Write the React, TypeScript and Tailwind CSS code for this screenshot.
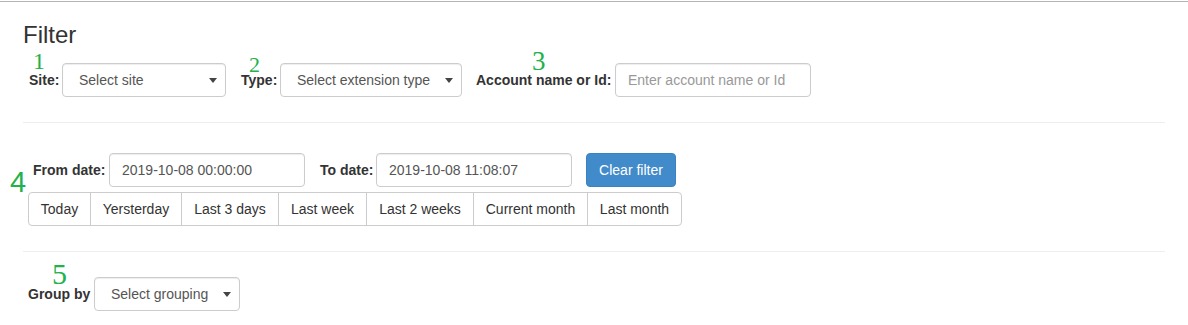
import React from "react";

const font = { fontFamily: '"Liberation Sans", Arial, sans-serif' };

const Arrow: React.FC = () => (
    <svg width="8" height="5" viewBox="0 0 8 5" className="shrink-0">
        <path d="M0 0 L8 0 L4 5 Z" fill="#444" />
    </svg>
);

const Select: React.FC<{ text: string; width: string }> = ({ text, width }) => (
    <div className={`${width} h-[34px] border border-[#ccc] rounded-[4px] pl-4 pr-2 flex items-center justify-between text-[14px] text-[#555] bg-white shadow-[inset_0_1px_1px_rgba(0,0,0,0.075)]`}>
        <span>{text}</span>
        <Arrow />
    </div>
);

const Input: React.FC<{ text: string; placeholder?: boolean }> = ({ text, placeholder }) => (
    <div className={`w-[196px] h-[34px] border border-[#ccc] rounded-[4px] px-3 flex items-center text-[14px] bg-white shadow-[inset_0_1px_1px_rgba(0,0,0,0.075)] ${placeholder ? "text-[#999]" : "text-[#555]"}`}>
        {text}
    </div>
);

// green annotation numbers drawn over the form
const Num: React.FC<{ n: string; className: string }> = ({ n, className }) => (
    <span className={`absolute leading-[0.7] text-[#22b14c] font-normal ${className}`} style={{ fontFamily: '"Liberation Serif", "Times New Roman", serif' }}>
        {n}
    </span>
);

const ranges: [string, string][] = [
    ["Today", "w-[61px]"],
    ["Yersterday", "w-[91px]"],
    ["Last 3 days", "w-[97px]"],
    ["Last week", "w-[88px]"],
    ["Last 2 weeks", "w-[107px]"],
    ["Current month", "w-[114px]"],
    ["Last month", "w-[94px]"],
];

const label = "relative shrink-0 whitespace-nowrap text-[14px] font-bold leading-4";

const App: React.FC = () => {
    return (
        <div className="w-[1188px] h-[325px] bg-white text-[#333] overflow-hidden" style={font}>
            <div className="h-px mt-px bg-[#b4b4b4]" />

            <div className="px-[23px]">
                <h3 className="mt-[20px] text-[24px] leading-[1.1] font-normal">Filter</h3>

                {/* row 1 */}
                <div className="mt-[15px] pl-[6px] flex items-center">
                    <label className={`${label} w-[33px]`}>
                        <Num n="1" className="text-[24px] top-[-19px] left-[4px]" />
                        Site:
                    </label>
                    <Select text="Select site" width="w-[164px]" />

                    <label className={`${label} ml-[15px] w-[39px]`}>
                        <Num n="2" className="text-[22px] top-[-15px] left-[8px]" />
                        Type:
                    </label>
                    <Select text="Select extension type" width="w-[182px]" />

                    <label className={`${label} ml-[14px] w-[139px]`}>
                        <Num n="3" className="text-[27px] top-[-20px] left-[56px]" />
                        Account name or Id:
                    </label>
                    <Input text="Enter account name or Id" placeholder />
                </div>

                <hr className="mt-[25px] border-0 border-t border-[#eee]" />

                {/* row 2 */}
                <div className="relative mt-[30px]">
                    <span className="absolute top-[15px] left-[-13px] text-[29px] leading-none text-[#22b14c]">4</span>
                    <div className="pl-[10px] flex items-center">
                        <label className={`${label} w-[76px]`}>From date:</label>
                        <Input text="2019-10-08 00:00:00" />
                        <label className={`${label} ml-[15px] w-[56px]`}>To date:</label>
                        <Input text="2019-10-08 11:08:07" />
                        <button className="ml-[14px] w-[90px] h-[34px] rounded-[4px] bg-[#428bca] border border-[#3b82c0] text-white text-[14px]">
                            Clear filter
                        </button>
                    </div>
                    <div className="mt-[5px] ml-[5px] inline-flex h-[34px] border border-[#ccc] rounded-[4px] text-[14px] text-[#333]">
                        {ranges.map(([r, w], i) => (
                            <div key={r} className={`${w} flex items-center justify-center ${i > 0 ? "border-l border-[#ccc]" : ""}`}>
                                {r}
                            </div>
                        ))}
                    </div>
                </div>

                <hr className="mt-[25px] border-0 border-t border-[#eee]" />

                {/* row 3 */}
                <div className="mt-[25px] pl-[5px] flex items-center">
                    <label className={`${label} w-[66px]`}>
                        <Num n="5" className="text-[30px] top-[-23px] left-[24px]" />
                        Group by
                    </label>
                    <Select text="Select grouping" width="w-[146px]" />
                </div>
            </div>
        </div>
    );
};

export default App;
